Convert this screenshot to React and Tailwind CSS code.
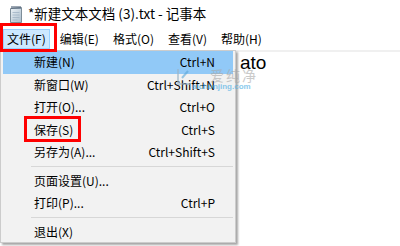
import React from 'react';

const cjk = "font-['Noto_Sans_CJK_SC','Noto_Sans',sans-serif]";

const menuBar = ['文件(F)', '编辑(E)', '格式(O)', '查看(V)', '帮助(H)'];

const fileMenu = [
  { label: '新建(N)', key: 'Ctrl+N', active: true },
  { label: '新窗口(W)', key: 'Ctrl+Shift+N' },
  { label: '打开(O)...', key: 'Ctrl+O' },
  { label: '保存(S)', key: 'Ctrl+S' },
  { label: '另存为(A)...', key: 'Ctrl+Shift+S' },
  { sep: true },
  { label: '页面设置(U)...', key: '' },
  { label: '打印(P)...', key: 'Ctrl+P' },
  { sep: true },
  { label: '退出(X)', key: '' },
];

function NotepadIcon() {
  return (
    <svg width="14" height="18" viewBox="0 0 14 18">
      <defs>
        <linearGradient id="pg" x1="0" y1="0" x2="1" y2="1">
          <stop offset="0" stopColor="#eef4f8" />
          <stop offset="1" stopColor="#a9bccb" />
        </linearGradient>
      </defs>
      <path d="M1.5 3.5 L12.5 2.5 L12.5 17.5 L1.5 17.5 Z" fill="url(#pg)" stroke="#7d8d99" strokeWidth="1" />
      <path d="M3 1 v3 M5 1 v3 M7 1 v3 M9 1 v3 M11 1 v3" stroke="#3a4f66" strokeWidth="1" />
      <path d="M3.5 7.5 h7 M3.5 10 h7 M3.5 12.5 h7 M3.5 15 h5" stroke="#9fb3c4" strokeWidth="0.8" />
    </svg>
  );
}

export default function App() {
  return (
    <div className={`relative w-[400px] h-[246px] bg-white overflow-hidden flex flex-col text-black ${cjk}`}>
      {/* title bar */}
      <div className="h-[28px] flex items-center pl-[9px] shrink-0">
        <NotepadIcon />
        <span className="ml-[5px] text-[13.5px] leading-none">*新建文本文档 (3).txt - 记事本</span>
      </div>

      {/* menu bar */}
      <div className="h-[22px] flex items-center pl-[3px] text-[12px] shrink-0">
        {menuBar.map((m, i) => (
          <div
            key={m}
            className={`h-[20px] flex items-center px-[3px] mr-[6px] border ${
              i === 0 ? 'bg-[#cce8ff] border-[#99d1ff]' : 'border-transparent'
            }`}
          >
            {m}
          </div>
        ))}
      </div>

      {/* editor */}
      <div className="flex-1 border-t-[2px] border-[#f0f0f0] pl-[240px] pt-[1px] text-[19px] leading-[20px] font-['Liberation_Sans',sans-serif]">
        ato
      </div>

      {/* file menu */}
      <div className="absolute left-0 top-[50px] w-[236px] h-[193px] bg-[#f2f2f2] border border-[#cccccc] shadow-[2px_2px_2px_rgba(0,0,0,0.35)] pl-[2px] pr-[2px] text-[12px]">
        {fileMenu.map((it, i) =>
          it.sep ? (
            <div key={i} className="h-[6px] flex items-center pl-[28px]">
              <div className="h-px w-full bg-[#d7d7d7]" />
            </div>
          ) : (
            <div
              key={i}
              className={`h-[22.5px] flex items-center justify-between pl-[31px] pr-[18px] ${
                it.active ? 'bg-[#91c9f7]' : ''
              }`}
            >
              <span>{it.label}</span>
              <span>{it.key}</span>
            </div>
          )
        )}
      </div>

      {/* watermark */}
      <div className="absolute left-[176px] top-[68px] flex items-start opacity-60 pointer-events-none">
        <svg width="16" height="18" viewBox="0 0 16 18">
          <path d="M2 1 v15 h12" fill="none" stroke="#9bb5c8" strokeWidth="2" />
          <path d="M6 10 l6 -7" fill="none" stroke="#5aa7d6" strokeWidth="2" />
        </svg>
        <span className="ml-[18px] text-[14px] leading-[14px] text-[#a8a8a8] tracking-[2px]">爱纯净</span>
      </div>
      <div className="absolute left-[192px] top-[83px] text-[8px] leading-[8px] text-[#5ab4e6] opacity-70 font-bold font-['Liberation_Sans',sans-serif] pointer-events-none">
        aichunjing.com
      </div>

      {/* red annotation boxes */}
      <div className="absolute left-0 top-[23px] w-[57px] h-[29px] border-[3px] border-[#ff0000]" />
      <div className="absolute left-[24px] top-[116px] w-[57px] h-[26px] border-[3px] border-[#ff0000]" />
    </div>
  );
}
